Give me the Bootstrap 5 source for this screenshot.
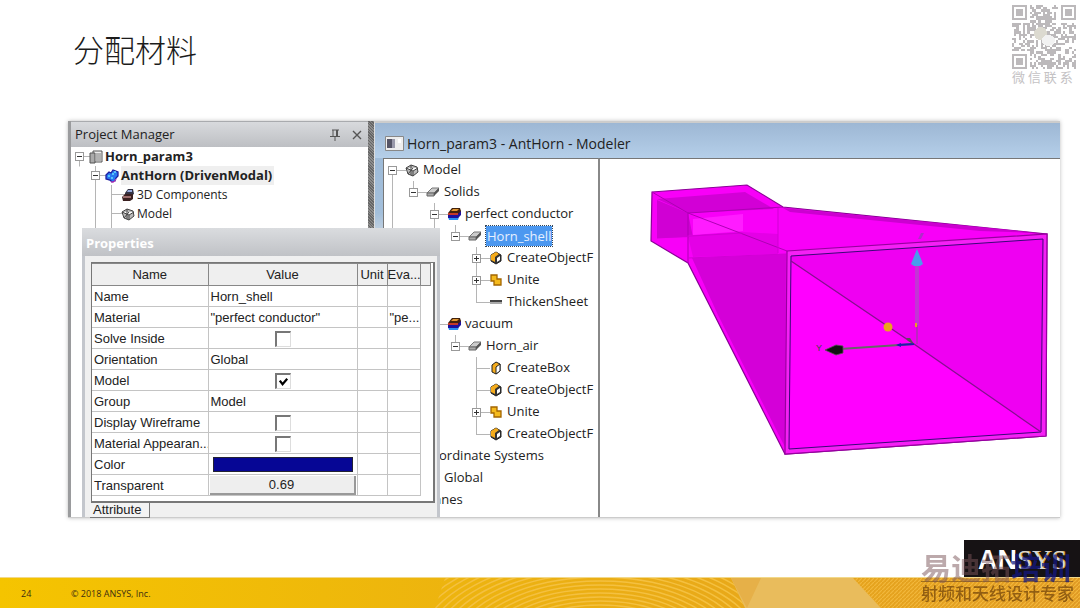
<!DOCTYPE html>
<html lang="zh-CN">
<head>
<meta charset="utf-8">
<meta name="viewport" content="width=device-width, initial-scale=1">
<title>分配材料</title>
<link href="https://cdn.jsdelivr.net/npm/bootstrap@5.3.0/dist/css/bootstrap.min.css" rel="stylesheet">
<style>
body{font-family:"Open Sans","Noto Sans CJK SC",sans-serif;color:#222;background:#fff;overflow-x:hidden}
.slide-title{font:300 31px/40px "Noto Sans CJK SC",sans-serif;color:#1c1c1c}
.contact{width:66px;color:#c4c2c4;font:13px/16px "Noto Sans CJK SC",sans-serif;white-space:nowrap}
.slide-head{padding:5px 2px 0 73px;height:121px}
.slide-head .slide-title{margin-top:24px}
.workspace{margin:0 20px 22px 68px;box-shadow:0 0 4px #bbb;border-bottom:1px solid #ccc}
.project{width:300px;border-left:3px solid #9a9b9d;background:#fff}
.pane-head{height:26px;padding:0 4px 0 4px;background:linear-gradient(#d8dadd,#bdbfc3);border-top:1px solid #a9abae;font-size:13px}
.pane-head button,.props-head button{background:none;border:0;padding:0;line-height:0}
.splitter{width:6px;background:repeating-linear-gradient(45deg,#666 0 1px,#8c8c8c 1px 2px)}
.modeler{border-left:1px solid #ddd;border-top:2px solid #ccc;padding-left:8px;background:linear-gradient(#9db9d6 0,#a3bfdb 90px,#e6e6e6 130px)}
.modeler-head{height:35px;padding-top:6px;font-size:14px;gap:3px;margin-left:-8px;padding-left:10px;background:linear-gradient(#9db7d4,#b5cfe9)}
.model-pane{width:215px;padding-right:3px;background:#fff;border-left:1px solid #777;border-top:1px solid #777}
.viewport{background:#fff;border-left:2px solid #888;border-top:1px solid #777}

.tree,.tree ul{list-style:none;margin:0;padding:0}
.tree li{background:linear-gradient(#b5b5b5,#b5b5b5) var(--x) 0/1px 100% no-repeat}
.tree li:last-child{background-size:1px calc(var(--h)/2)}
.tree>li:first-child{background-position:var(--x) calc(var(--h)/2)}
.tree .node{display:flex;align-items:center;height:var(--h);white-space:nowrap;background:linear-gradient(#b5b5b5,#b5b5b5) var(--x) 50%/14px 1px no-repeat}
.tree .twist{width:var(--s);flex:none;display:flex}
.tree .twist button{all:unset;box-sizing:border-box;width:9px;height:9px;margin-left:calc(var(--x) - 4px);border:1px solid #999;background:linear-gradient(#333,#333) center/5px 1px no-repeat #fff}
.tree .twist .closed{background:linear-gradient(#333,#333) center/5px 1px no-repeat,linear-gradient(#333,#333) center/1px 5px no-repeat,#fff}
.tree .ico{flex:none;width:var(--i);display:flex;justify-content:center}
.tree .ico svg{width:14px;height:14px}
.tree ul{padding-left:var(--step)}
.tree-model{--x:8px;--h:22px;--s:18px;--i:20px;--step:21px;font-size:13px;overflow:hidden}
.tree-model .ico{margin-right:1px}
.tree-project{--x:8px;--h:19px;--s:16px;--i:18px;--step:16px;font-size:12px;height:81px;overflow:hidden}
.tree-project .top-name{font-size:13px;font-weight:700}
.on-row{background:#efefef;padding:0 2px 0 0}
.picked{background:#4c98f0;color:#e6f0ff;outline:1px dotted #345;padding:0 1px;line-height:20px}

.props{left:14px;top:107px;bottom:0;width:358px;border:solid #c3c6cc;border-width:0 3px;background:#f0f0f0;font-family:"Liberation Sans",sans-serif}
.props-head{height:28px;margin:0 -3px;padding:0 8px 0 4px;color:#fff;font:700 13px/30px "Open Sans",sans-serif;background:linear-gradient(#dadcdf,#c0c2c6)}
.props-frame{margin:6px 2px 0 6px;border:solid #777;border-width:1px 2px 2px 1px;background:#fff;height:241px}
.grid{width:338px;table-layout:fixed;border-collapse:collapse;font-size:13px;line-height:15px;color:#222}
.grid th,.grid td{height:21px;border:1px solid #c4c4c4;padding:0 0 0 2px;font-weight:400;white-space:nowrap;overflow:hidden;vertical-align:middle}
.grid th{height:22px;padding:0;background:#efefef;border-color:#888;text-align:center}
.grid td:first-child,.grid th:first-child{border-left:0}
.grid td:last-child{border:0}
.grid .form-check-input{appearance:none;display:block;margin:2px 0 0 64px;float:none;width:16px;height:16px;border:solid #777;border-width:2px 1px 1px 2px;border-right-color:#ddd;border-bottom-color:#ddd;border-radius:0;background-color:#fff}
.grid .form-check-input:checked{background-image:url("data:image/svg+xml,%3Csvg xmlns='http://www.w3.org/2000/svg' viewBox='0 0 14 14'%3E%3Cpath d='M3 6l3 4 5-6' fill='none' stroke='%23000' stroke-width='2.4'/%3E%3C/svg%3E")}
.swatch{display:block;width:140px;height:15px;margin-left:2px;border:1px solid #223;background:#060695;padding:0}
.amount{display:block;width:146px;height:19px;margin-left:-1px;border:solid;border-width:0 2px 2px 0;border-color:#999;background:#eee;padding:0;color:#222}
.sheet-tab{width:60px;height:15px;margin-left:5px;padding:0 3px;border:solid #777;border-width:0 1px 1px 0;background:#f3f3f3;font-size:13px;line-height:14px;text-align:left;color:#222}

.brand{width:116px;height:37px;background:#161214;color:#fff;line-height:37px;font-size:27px;padding-left:14px;white-space:nowrap}
.brand b{font-family:"Liberation Sans",sans-serif}
.brand span{font-family:"Liberation Serif",serif;color:#d6d6d6;text-shadow:1px 0 #e3a32c}
.foot{height:31px;background:linear-gradient(90deg,#f5c400,#efb90a 30%,#eaac16 60%,#e09a24);border-top:1px solid #f2d98a;font:9px/32px "Open Sans",sans-serif;color:#3d2f10}
.foot svg{right:0;top:0;height:30px;width:650px}
.foot .num{width:71px;padding-left:21px}
.mark-over{right:7px;bottom:4px;width:152px;white-space:nowrap;font-family:"Noto Sans CJK SC",sans-serif;pointer-events:none}
.mark-a{font-size:30px;line-height:30px;font-weight:700;color:rgba(122,84,88,.5);border-bottom:1px solid rgba(110,70,20,.6)}
.mark-a span{color:rgba(20,24,130,.75)}
.mark-b{font-size:17px;line-height:22px;color:rgba(112,66,10,.72);font-weight:500}
</style>
</head>
<body class="d-flex flex-column min-vh-100">

<svg width="0" height="0" class="position-absolute" aria-hidden="true">
  <symbol id="i-wire" viewBox="0 0 14 14"><path d="M1 5l5-3 6 2 1 5-5 4-5-2zM6 2v10M1 5l7 3 5-3M8 8v5M3 11l5-6" fill="#bbb" stroke="#444" stroke-width="1"/></symbol>
  <symbol id="i-solid" viewBox="0 0 14 14"><path d="M1 8l5-5h7l-5 5z" fill="#ccc" stroke="#777"/><path d="M1 8h7v3H1z" fill="#aaa" stroke="#666"/><path d="M8 8l5-5v3l-5 5z" fill="#555"/></symbol>
  <symbol id="i-mat" viewBox="0 0 14 14"><path d="M1 10l3-3h9l-2 6H2z" fill="#2b8ff0"/><path d="M1 7l3-3h10v4l-3 3H1z" fill="#1c109c"/><path d="M1 6l4-5h8l1 3-3 3H1z" fill="#40210c"/><path d="M4 4l2-2h6l-2 2z" fill="#e09632"/><path d="M1 6h10v2H1z" fill="#c33828"/></symbol>
  <symbol id="i-box" viewBox="0 0 14 14"><path d="M3 4l4-3 4 2v7l-4 3-4-2z" fill="#f5ac1c" stroke="#222"/><path d="M7 6l4-3v7l-4 3z" fill="#fff" stroke="#222"/></symbol>
  <symbol id="i-obj" viewBox="0 0 14 14"><path d="M2 4l5-3 5 3v6l-5 3-5-3z" fill="#333" stroke="#222"/><path d="M2 4l5-3 3 2-4 3v5l-4-2z" fill="#f5ac1c"/><path d="M8 7l3-2v4l-3 2z" fill="#fff"/></symbol>
  <symbol id="i-unite" viewBox="0 0 14 14"><path d="M2 2h6v4h4v6H5V8H2z" fill="#f5ba1c" stroke="#a36500" stroke-width="1.3"/></symbol>
  <symbol id="i-sheet" viewBox="0 0 14 14"><path d="M1 5h12v4H1z" fill="#aaa"/><path d="M1 5h12v2H1z" fill="#444"/></symbol>
  <symbol id="i-proj" viewBox="0 0 14 14"><path d="M4 1h9v11H4z" fill="#eee" stroke="#555"/><path d="M7 4h5M7 6h5M7 8h5M7 10h5" stroke="#777"/><path d="M1 3h5v10H1z" fill="#aaa" stroke="#555"/></symbol>
  <symbol id="i-hfss" viewBox="0 0 14 14"><path d="M1 6l3-3 2 1 2-3 5 2v4l-2 2-1 3-3 1-2-2-4-1z" fill="#2878f0" stroke="#1c1ca0" stroke-width="1.3"/><path d="M3 7h2M7 5h2M6 9h2M9 3h2" stroke="#6df" stroke-width="1.5"/><path d="M6 13h3l2-3" stroke="#e040c0" fill="none"/></symbol>
  <symbol id="i-comp" viewBox="0 0 14 14"><path d="M4 5l3-4h5l1 5-3 2H4z" fill="#334"/><path d="M7 2h4v2H6z" fill="#9ad"/><path d="M1 9l3-3h8v5l-3 2H2z" fill="#3a2020"/><path d="M2 9h8" stroke="#fbb"/></symbol>
</svg>

<header class="slide-head d-flex justify-content-between align-items-start">
  <h1 class="slide-title mb-0">分配材料</h1>
  <div class="contact">
    <svg id="qr" class="d-block" width="64" height="64" viewBox="0 0 29 29" shape-rendering="crispEdges" role="img" aria-label="微信二维码"></svg>
    微 信 联 系
  </div>
</header>

<main class="workspace position-relative d-flex flex-grow-1">
  <section class="project flex-shrink-0">
    <div class="pane-head d-flex align-items-center">
      <span class="me-auto">Project Manager</span>
      <button type="button" class="me-2" aria-label="Pin"><svg width="14" height="14" fill="none" stroke="#555"><path d="M4 2h7M5 2v6M9.500 2v6M8.500 2v6M2 8.500h10M7 9v4"/></svg></button>
      <button type="button" aria-label="Close"><svg width="14" height="14" stroke="#555" stroke-width="1.400"><path d="M3 3l8 8M11 3l-8 8"/></svg></button>
    </div>
    <ul class="tree tree-project">
      <li><div class="node top-name"><span class="twist"><button type="button" aria-label="Collapse"></button></span><span class="ico"><svg><use href="#i-proj"/></svg></span>Horn_param3</div>
        <ul>
          <li><div class="node top-name"><span class="twist"><button type="button" aria-label="Collapse"></button></span><span class="ico"><svg><use href="#i-hfss"/></svg></span><span class="on-row">AntHorn (DrivenModal)</span></div>
            <ul>
              <li><div class="node"><span class="twist"></span><span class="ico"><svg><use href="#i-comp"/></svg></span>3D Components</div></li>
              <li><div class="node"><span class="twist"></span><span class="ico"><svg><use href="#i-wire"/></svg></span>Model</div></li>
              <li><div class="node"></div></li>
            </ul>
          </li>
          <li><div class="node"></div></li>
        </ul>
      </li>
    </ul>
  </section>
  <div class="splitter flex-shrink-0"></div>

  <section class="modeler d-flex flex-column flex-grow-1">
    <div class="modeler-head d-flex align-items-center">
      <svg width="19" height="15"><path d="M.5.500h18v14H.5z" fill="#eee" stroke="#888"/><path d="M2 3h8v9H2z" fill="#556"/><path d="M7 3h3v9H7z" fill="#99a"/><path d="M13 3h3v4h-3z" fill="#fff"/></svg>
      <span>Horn_param3 - AntHorn - Modeler</span>
    </div>
    <div class="d-flex flex-grow-1">
      <div class="model-pane flex-shrink-0">
        <ul class="tree tree-model">
          <li><div class="node"><span class="twist"><button type="button" aria-label="Collapse"></button></span><span class="ico"><svg><use href="#i-wire"/></svg></span>Model</div>
            <ul>
              <li><div class="node"><span class="twist"><button type="button" aria-label="Collapse"></button></span><span class="ico"><svg><use href="#i-solid"/></svg></span>Solids</div>
                <ul>
                  <li><div class="node"><span class="twist"><button type="button" aria-label="Collapse"></button></span><span class="ico"><svg><use href="#i-mat"/></svg></span>perfect conductor</div>
                    <ul>
                      <li><div class="node"><span class="twist"><button type="button" aria-label="Collapse"></button></span><span class="ico"><svg><use href="#i-solid"/></svg></span><span class="picked">Horn_shell</span></div>
                        <ul>
                          <li><div class="node"><span class="twist"><button type="button" class="closed" aria-label="Expand"></button></span><span class="ico"><svg><use href="#i-obj"/></svg></span>CreateObjectF</div></li>
                          <li><div class="node"><span class="twist"><button type="button" class="closed" aria-label="Expand"></button></span><span class="ico"><svg><use href="#i-unite"/></svg></span>Unite</div></li>
                          <li><div class="node"><span class="twist"></span><span class="ico"><svg><use href="#i-sheet"/></svg></span>ThickenSheet</div></li>
                        </ul>
                      </li>
                    </ul>
                  </li>
                  <li><div class="node"><span class="twist"><button type="button" aria-label="Collapse"></button></span><span class="ico"><svg><use href="#i-mat"/></svg></span>vacuum</div>
                    <ul>
                      <li><div class="node"><span class="twist"><button type="button" aria-label="Collapse"></button></span><span class="ico"><svg><use href="#i-solid"/></svg></span>Horn_air</div>
                        <ul>
                          <li><div class="node"><span class="twist"></span><span class="ico"><svg><use href="#i-box"/></svg></span>CreateBox</div></li>
                          <li><div class="node"><span class="twist"></span><span class="ico"><svg><use href="#i-obj"/></svg></span>CreateObjectF</div></li>
                          <li><div class="node"><span class="twist"><button type="button" class="closed" aria-label="Expand"></button></span><span class="ico"><svg><use href="#i-unite"/></svg></span>Unite</div></li>
                          <li><div class="node"><span class="twist"></span><span class="ico"><svg><use href="#i-obj"/></svg></span>CreateObjectF</div></li>
                        </ul>
                      </li>
                    </ul>
                  </li>
                </ul>
              </li>
            </ul>
          </li>
          <li><div class="node"><span class="twist"></span><span class="ico"></span>Coordinate Systems</div>
            <ul><li><div class="node"><span class="twist"></span><span class="ico"></span>Global</div></li></ul>
          </li>
          <li><div class="node"><span class="twist"></span><span class="ico"></span>Planes</div></li>
        </ul>
      </div>
      <div class="viewport flex-grow-1">
        <svg class="d-block w-100" viewBox="600 159 460 358" role="img" aria-label="Horn antenna">
          <path d="M652 192l95-7 36 22 264 27-1 202-261 18-97-191-37-22z" fill="#f800f8" stroke="#8a0096" stroke-width="1.200"/>
          <path d="M657 199l88-7 29 17-86 4z" fill="#d200d6"/>
          <path d="M657 200l31 13 5 24-36 1z" fill="#d000d4"/>
          <path d="M688 235l54-3 36 2v20l-85 3-5-20z" fill="#e400e6"/>
          <path d="M693 219l50-5v17l-50 4z" fill="#ff1cff"/>
          <path d="M692 258l94-4-1 193-67-132z" fill="#d400d8"/>
          <path d="M783 208l257 25-60-2-190-19z" fill="#cc00d0"/>
          <path d="M787 251l260-17-1 202-261 18z" fill="#f520f5" stroke="#96009e" stroke-width="1.200"/>
          <path d="M791 256l252-17-2 193-252 17z" fill="#f0f"/>
          <path d="M791 261v-5l252-17-2 193z" fill="#ef00f2"/>
          <path d="M791 256l252-17-2 193-252 17z" fill="none" stroke="#3b0878"/>
          <path d="M652 192l36 21 95-6M688 213v50M688 213l99 38" fill="none" stroke="#ad00b4"/>
          <path d="M657 238l85-5M688 258l98-4M778 208v45" fill="none" stroke="#d000d4"/>
          <path d="M791 261l123 83 127 88" fill="none" stroke="#85108f" stroke-width="1.300"/>
          <path d="M917 266v60" stroke="#c235d5" stroke-width="4"/>
          <path d="M917 325v19" stroke="#8a4890"/><path d="M916 323v4" stroke="#e9a022" stroke-width="2"/>
          <path d="M917 249l-6 15 3 2h6l3-2z" fill="#4a9cec"/>
          <path d="M918 239l3-6 3 0-3 6z" fill="#b02cc8"/>
          <path d="M914 344l-74 5" stroke="#666" stroke-width="2"/>
          <path d="M914 344l-16 1" stroke="#1c1cae" stroke-width="2"/><path d="M896 345l5-2v4z" fill="#1c1cae"/>
          <path d="M825 350l11-5 7 1v7l-7 2z" fill="#111" stroke="#555" stroke-width=".8"/>
          <path d="M906 338l4 0 4 6-6-3z" fill="#555"/>
          <circle cx="888" cy="327" r="4.500" fill="#eaa31c"/>
          <text x="816" y="351" font-family="Liberation Sans" font-size="9" fill="#444">Y</text>
        </svg>
      </div>
    </div>
  </section>

  <section class="props position-absolute">
    <div class="props-head">Properties</div>
    <div class="props-frame">
      <table class="grid">
        <colgroup><col style="width:116px"><col style="width:149px"><col style="width:30px"><col style="width:33px"><col style="width:10px"></colgroup>
        <thead><tr><th>Name</th><th>Value</th><th>Unit</th><th>Eva...</th><th></th></tr></thead>
        <tbody>
          <tr><td>Name</td><td>Horn_shell</td><td></td><td></td><td></td></tr>
          <tr><td>Material</td><td>"perfect conductor"</td><td></td><td>"pe...</td><td></td></tr>
          <tr><td><label for="c1">Solve Inside</label></td><td><input id="c1" class="form-check-input" type="checkbox"></td><td></td><td></td><td></td></tr>
          <tr><td>Orientation</td><td>Global</td><td></td><td></td><td></td></tr>
          <tr><td><label for="c2">Model</label></td><td><input id="c2" class="form-check-input" type="checkbox" checked></td><td></td><td></td><td></td></tr>
          <tr><td>Group</td><td>Model</td><td></td><td></td><td></td></tr>
          <tr><td><label for="c3">Display Wireframe</label></td><td><input id="c3" class="form-check-input" type="checkbox"></td><td></td><td></td><td></td></tr>
          <tr><td><label for="c4">Material Appearan...</label></td><td><input id="c4" class="form-check-input" type="checkbox"></td><td></td><td></td><td></td></tr>
          <tr><td>Color</td><td><button type="button" class="swatch" aria-label="Color"></button></td><td></td><td></td><td></td></tr>
          <tr><td>Transparent</td><td><button type="button" class="amount">0.69</button></td><td></td><td></td><td></td></tr>
        </tbody>
      </table>
    </div>
    <button type="button" class="sheet-tab d-block">Attribute</button>
  </section>
</main>

<div class="d-flex justify-content-end"><div class="brand"><b>AN</b><span>SYS</span></div></div>
<footer class="foot position-relative d-flex">
  <svg class="position-absolute" viewBox="0 0 650 30" preserveAspectRatio="none" aria-hidden="true">
    <defs>
      <clipPath id="arcs"><path d="M15 0h286l14 30H5z"/></clipPath>
      <pattern id="weave" width="4" height="4" patternUnits="userSpaceOnUse"><path d="M0 4l4-4" stroke="#f2b83c" stroke-width="1.200"/></pattern>
    </defs>
    <g id="rings" clip-path="url(#arcs)" fill="none" stroke="#f4c040" stroke-width="1.500"></g>
    <path d="M301 0h122l28 30H315z" fill="#e9bc5c"/>
    <path d="M301 0h30l-14 30z" fill="#e6b048"/>
    <path d="M423 0h227v30H451z" fill="url(#weave)"/>
  </svg>
  <span class="num position-relative">24</span><span class="position-relative">© 2018 ANSYS, Inc.</span>
</footer>

<div class="mark-over position-fixed">
  <div class="mark-a">易迪拓<span>培训</span></div>
  <div class="mark-b">射频和天线设计专家</div>
</div>

<script src="https://cdn.jsdelivr.net/npm/bootstrap@5.3.0/dist/js/bootstrap.bundle.min.js"></script>
<script>
// QR modules: three finder squares, the rest from a fixed sequence
let d = '', seed = 7;
const inFinder = (x, y) => (x < 8 && y < 8) || (x > 20 && y < 8) || (x < 8 && y > 20);
for (let y = 0; y < 29; y++) for (let x = 0; x < 29; x++) {
  seed = (seed * 1103515245 + 12345) % 2147483648;
  if (!inFinder(x, y) && (seed >> 16) % 100 < 54) d += `M${x} ${y}h1v1h-1z`;
}
for (const [x, y] of [[0, 0], [22, 0], [0, 22]])
  d += `M${x} ${y}h7v7h-7zM${x + 1} ${y + 1}v5h5v-5zM${x + 2} ${y + 2}h3v3h-3z`;
document.getElementById('qr').innerHTML = `<path d="${d}" fill="#bcb9bb"/><circle cx="13" cy="13" r="3" fill="#dcdad0"/><ellipse cx="16.500" cy="16" rx="3" ry="2.500" fill="#f2f2f2"/>`;
// Concentric arcs in the footer band
let r = '';
for (let i = 0; i < 34; i++) r += `<ellipse cx="170" cy="75" rx="${30 + i * 7}" ry="${12 + i * 4}"/>`;
document.getElementById('rings').innerHTML = r;
</script>
</body>
</html>
